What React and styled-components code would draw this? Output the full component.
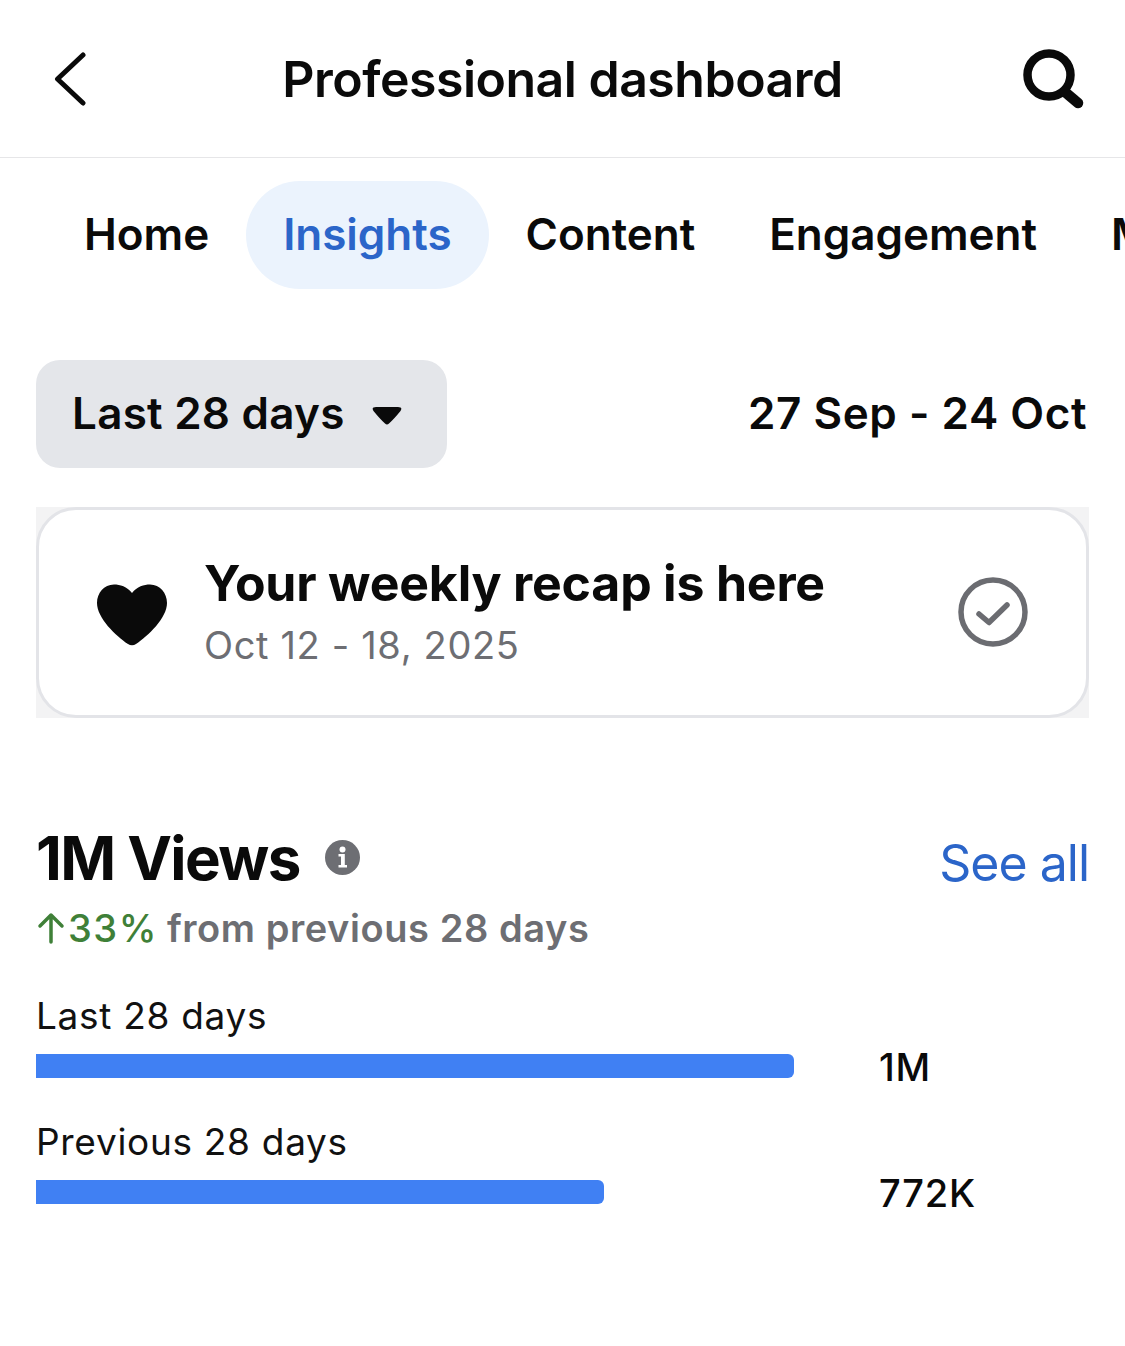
import React from "react";
import styled, { createGlobalStyle } from "styled-components";

const GlobalStyle = createGlobalStyle`
  html, body { margin: 0; padding: 0; background: #fff; }
  body { font-family: Inter, "Liberation Sans", sans-serif; color: #0a0a0a; }
`;

const Page = styled.div`
  width: 1125px;
  height: 1346px;
  overflow: hidden;
  background: #fff;
`;

const Header = styled.header`
  height: 157px;
  display: flex;
  align-items: center;
  justify-content: space-between;
  padding: 0 40px 0 46px;
  border-bottom: 1px solid #e6e6e8;
`;

const HeaderIcon = styled.span`
  display: flex;
  width: ${(p) => (p.$right ? 66 : 60)}px;
  justify-content: ${(p) => (p.$right ? "flex-end" : "flex-start")};
`;

const Title = styled.h1`
  margin: 0;
  font-size: 50px;
  font-weight: 600;
  letter-spacing: -0.5px;
`;

const Tabs = styled.nav`
  display: flex;
  padding: 23px 0 0 47px;
  overflow: hidden;
`;

const Tab = styled.div`
  flex: none;
  height: 106px;
  padding: 0 37px 2px;
  display: flex;
  align-items: center;
  border-radius: 54px;
  font-size: 44px;
  font-weight: 600;
  letter-spacing: -0.02px;
  color: ${(p) => (p.$active ? "#2b65c9" : "#0a0a0a")};
  background: ${(p) => (p.$active ? "#ebf3fd" : "transparent")};
`;

const RangeRow = styled.div`
  display: flex;
  align-items: center;
  justify-content: space-between;
  margin: 71px 38px 0 36px;
`;

const RangeButton = styled.div`
  width: 411px;
  height: 108px;
  box-sizing: border-box;
  padding: 0 45px 2px 36px;
  display: flex;
  align-items: center;
  justify-content: space-between;
  border-radius: 24px;
  background: #e4e6ea;
  font-size: 44px;
  font-weight: 600;
  letter-spacing: 0.25px;
`;

const CaretWrap = styled.span`
  display: flex;
  margin-top: 5px;
`;

const DateText = styled.div`
  padding-bottom: 2px;
  font-size: 44px;
  font-weight: 600;
  letter-spacing: 0.55px;
`;

const CardCorners = styled.div`
  margin: 39px 36px 0;
  height: 211px;
  background: #f3f3f4;
`;

const Card = styled.div`
  height: 100%;
  box-sizing: border-box;
  display: flex;
  align-items: center;
  padding: 0 58px 0 57px;
  background: #fff;
  border: 3px solid #e3e4e8;
  border-radius: 40px;
`;

const HeartWrap = styled.span`
  display: flex;
  margin-top: 5px;
`;

const CheckWrap = styled.span`
  display: flex;
  margin-top: -2px;
`;

const CardText = styled.div`
  flex: 1;
  margin: 0 0 4px 36px;
`;

const CardTitle = styled.div`
  font-size: 50px;
  font-weight: 700;
  letter-spacing: -0.2px;
  line-height: 60px;
`;

const CardDate = styled.div`
  margin-top: 9px;
  font-size: 38px;
  line-height: 46px;
  color: #6d6e73;
  letter-spacing: 0.65px;
`;

const Section = styled.section`
  margin: 103px 36px 0 36px;
`;

const SectionHead = styled.div`
  display: flex;
  align-items: center;
  justify-content: space-between;
`;

const HeadLeft = styled.div`
  display: flex;
  align-items: center;
  gap: 25px;
`;

const InfoWrap = styled.span`
  display: flex;
  margin-top: -2px;
`;

const Views = styled.h2`
  margin: 0;
  font-size: 60px;
  line-height: 74px;
  font-weight: 700;
  letter-spacing: -1.6px;
`;

const SeeAll = styled.div`
  margin-top: 10px;
  font-size: 50px;
  color: #2b65c9;
  letter-spacing: -1px;
`;

const Change = styled.div`
  margin: 10px 0 0 1px;
  display: flex;
  align-items: center;
  font-size: 38px;
  line-height: 46px;
  font-weight: 600;
  color: #6d6e73;
  letter-spacing: 0.57px;
`;

const Up = styled.span`
  display: flex;
  align-items: center;
  gap: 3px;
  margin-right: 9px;
  font-weight: 500;
  letter-spacing: 1.5px;
  color: #3f8038;
`;

const BarGroup = styled.div`
  margin-top: ${(p) => p.$top}px;
`;

const BarLabel = styled.div`
  font-size: 37px;
  line-height: 44px;
  letter-spacing: 0.7px;
  color: #111;
`;

const BarRow = styled.div`
  display: grid;
  grid-template-columns: 843px 1fr;
  align-items: center;
  margin-top: 13px;
`;

const Bar = styled.div`
  height: 24px;
  width: ${(p) => p.$width}px;
  background: #4080f3;
  border-radius: 0 6px 6px 0;
`;

const BarValue = styled.div`
  padding-top: 2px;
  font-size: 38px;
  line-height: 28px;
  font-weight: 500;
  letter-spacing: 0.8px;
`;

const BackIcon = () => (
  <svg width="40" height="60" viewBox="0 0 40 60" fill="none">
    <path d="M37 6 L11.500 30 L37 54" stroke="#0a0a0a" strokeWidth="5" strokeLinecap="round" strokeLinejoin="round" />
  </svg>
);

const SearchIcon = () => (
  <svg width="62" height="62" viewBox="0 0 62 62" fill="none">
    <circle cx="26" cy="27" r="21.500" stroke="#0a0a0a" strokeWidth="8.500" />
    <path d="M42 44 L55 55" stroke="#0a0a0a" strokeWidth="10.500" strokeLinecap="round" />
  </svg>
);

const Caret = () => (
  <svg width="30" height="20" viewBox="0 0 30 20">
    <path d="M4 1 H26 Q31 1 28.500 5 Q22 13 17 17.500 Q15 19.500 13 17.500 Q8 13 1.500 5 Q-1 1 4 1 Z" fill="#0a0a0a" />
  </svg>
);

const HeartIcon = () => (
  <svg width="72" height="62" viewBox="0 0 72 62">
    <path
      d="M36 9 C31 2.500 24 0.500 18 0.500 C8 0.500 1 9 1 19 C1 34 20 52 32 60 C34.500 61.800 37.500 61.800 40 60 C52 52 71 34 71 19 C71 9 64 0.500 54 0.500 C48 0.500 41 2.500 36 9 Z"
      fill="#0a0a0a"
    />
  </svg>
);

const CheckIcon = () => (
  <svg width="70" height="70" viewBox="0 0 70 70" fill="none">
    <circle cx="35" cy="35" r="32" stroke="#6b6c71" strokeWidth="5.500" />
    <path d="M21 37 L31 45.500 L49 28" stroke="#6b6c71" strokeWidth="5.500" strokeLinecap="round" strokeLinejoin="round" />
  </svg>
);

const InfoIcon = () => (
  <svg width="35" height="35" viewBox="0 0 35 35">
    <circle cx="17.500" cy="17.500" r="17.500" fill="#6d6e73" />
    <circle cx="17.500" cy="9.500" r="3" fill="#fff" />
    <path d="M13.500 14 H19.800 V25 H22 V27.500 H13.500 V25 H16 V16.500 H13.500 Z" fill="#fff" />
  </svg>
);

const ArrowUp = () => (
  <svg width="28" height="32" viewBox="0 0 28 32" fill="none">
    <path d="M14 30 V3 M3 14 L14 3 L25 14" stroke="#3f8038" strokeWidth="3.500" strokeLinecap="round" strokeLinejoin="round" />
  </svg>
);

const tabs = ["Home", "Insights", "Content", "Engagement", "Monetization"];

const bars = [
  { label: "Last 28 days", width: 758, value: "1M", top: 43 },
  { label: "Previous 28 days", width: 568, value: "772K", top: 39 },
];

export default function App() {
  return (
    <Page>
      <GlobalStyle />
      <Header>
        <HeaderIcon>
          <BackIcon />
        </HeaderIcon>
        <Title>Professional dashboard</Title>
        <HeaderIcon $right>
          <SearchIcon />
        </HeaderIcon>
      </Header>
      <Tabs>
        {tabs.map((t) => (
          <Tab key={t} $active={t === "Insights"}>
            {t}
          </Tab>
        ))}
      </Tabs>
      <RangeRow>
        <RangeButton>
          Last 28 days
          <CaretWrap>
            <Caret />
          </CaretWrap>
        </RangeButton>
        <DateText>27 Sep - 24 Oct</DateText>
      </RangeRow>
      <CardCorners>
        <Card>
          <HeartWrap>
            <HeartIcon />
          </HeartWrap>
          <CardText>
            <CardTitle>Your weekly recap is here</CardTitle>
            <CardDate>Oct 12 - 18, 2025</CardDate>
          </CardText>
          <CheckWrap>
            <CheckIcon />
          </CheckWrap>
        </Card>
      </CardCorners>
      <Section>
        <SectionHead>
          <HeadLeft>
            <Views>1M Views</Views>
            <InfoWrap>
              <InfoIcon />
            </InfoWrap>
          </HeadLeft>
          <SeeAll>See all</SeeAll>
        </SectionHead>
        <Change>
          <Up>
            <ArrowUp />
            33%
          </Up>
          from previous 28 days
        </Change>
        {bars.map((b) => (
          <BarGroup key={b.label} $top={b.top}>
            <BarLabel>{b.label}</BarLabel>
            <BarRow>
              <Bar $width={b.width} />
              <BarValue>{b.value}</BarValue>
            </BarRow>
          </BarGroup>
        ))}
      </Section>
    </Page>
  );
}
